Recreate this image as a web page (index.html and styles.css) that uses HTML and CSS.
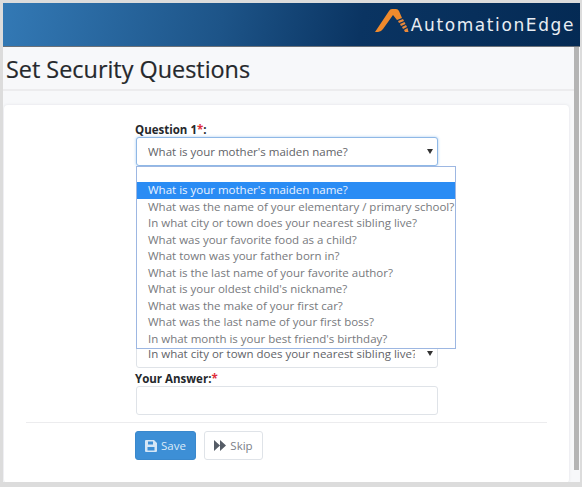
FILE: index.html
```html
<!DOCTYPE html>
<html lang="en">
<head>
  <meta charset="UTF-8">
  <title>Set Security Questions</title>
  <meta name="viewport" content="width=device-width, initial-scale=1.0">
  <link rel="stylesheet" href="styles.css">
</head>
<body>
  <div class="window">
    <header class="topbar">
      <div class="brand">
        <svg class="brand-mark" width="34" height="24" viewBox="0 0 34 24">
          <path d="M0 23 L14 2 Q15 0 17 0 L21 0 Q23 0 24 2 L27 9 L22 11 L18 6 L8 20 Q6 23 3 23 Z" fill="#f08a2c"/>
          <path d="M23 12 L28 10 L29 12 L24 14 Z M25 15 L29.500 13 L30.500 15 L26 17 Z M27 18 L31 16 L32 18 L28 20 Z M29 21 L32.500 19 L33.500 23 L30 23 Z" fill="#e9883a"/>
        </svg>
        <span class="brand-name">AutomationEdge</span>
      </div>
    </header>

    <div class="page-body">
      <div class="page-main">
        <div class="title-band">
          <h1>Set Security Questions</h1>
        </div>

        <main class="card">
          <form class="form-col">
            <label class="q-label">Question 1<span class="req">*</span>:</label>
            <div class="select-wrap">
              <select class="ctl ctl-open">
                <option>What is your mother's maiden name?</option>
              </select>
              <div class="dropdown">
                <div class="opt-search"></div>
                <div class="opt opt-active">What is your mother's maiden name?</div>
                <div class="opt">What was the name of your elementary / primary school?</div>
                <div class="opt">In what city or town does your nearest sibling live?</div>
                <div class="opt">What was your favorite food as a child?</div>
                <div class="opt">What town was your father born in?</div>
                <div class="opt">What is the last name of your favorite author?</div>
                <div class="opt">What is your oldest child's nickname?</div>
                <div class="opt">What was the make of your first car?</div>
                <div class="opt">What was the last name of your first boss?</div>
                <div class="opt">In what month is your best friend's birthday?</div>
              </div>
            </div>

            <select class="ctl">
              <option>In what city or town does your nearest sibling live?</option>
            </select>

            <label class="q-label">Your Answer:<span class="req">*</span></label>
            <input type="text" class="ctl">
          </form>

          <div class="actions">
            <div class="actions-inner">
              <button type="button" class="btn btn-save">
                <svg width="12" height="12" viewBox="0 0 12 12"><path d="M1 0 H9 L12 3 V11 Q12 12 11 12 H1 Q0 12 0 11 V1 Q0 0 1 0 Z M3 1.500 V4.500 H8 V1.500 Z M2.500 7 V10.500 H9.500 V7 Z" fill="#d5e6f6" fill-rule="evenodd"/></svg>
                Save
              </button>
              <button type="button" class="btn btn-skip">
                <svg width="12" height="11" viewBox="0 0 12 11"><path d="M0 0 L6 5.500 L0 11 Z M6 0 L12 5.500 L6 11 Z" fill="#555c66"/></svg>
                Skip
              </button>
            </div>
          </div>
        </main>
      </div>
      <div class="scrollbar"></div>
    </div>
  </div>
</body>
</html>
```

FILE: styles.css
```css
html, body {
  margin: 0;
  height: 100%;
}

body {
  font-family: 'Open Sans', 'Noto Sans', sans-serif;
  background-color: #dcdcdc;
  overflow: hidden;
}

.window {
  width: 577px;
  height: 479px;
  margin: 3px 0 0 3px;
  background-color: #f7f8fa;
  overflow: hidden;
}

.topbar {
  height: 43px;
  display: flex;
  justify-content: flex-end;
  background: linear-gradient(100deg, #3379b5 0%, #1d5488 38%, #0a3462 62%, #042a54 100%);
  border-bottom: 1px solid #6b7178;
}

.brand {
  display: flex;
  align-items: flex-start;
  gap: 2px;
  padding: 6px 0 0 0;
  margin-right: 5px;
}

.brand-mark {
  display: block;
}

.brand-name {
  font-family: 'DejaVu Sans', sans-serif;
  font-size: 17px;
  line-height: 32px;
  letter-spacing: 1.600px;
  color: #e8edf3;
}

.page-body {
  display: flex;
}

.page-main {
  width: 571px;
}

.scrollbar {
  width: 5px;
  height: 423px;
  background-color: #b4b4b4;
}

.title-band {
  height: 42px;
  border-bottom: 2px solid #ececee;
}

h1 {
  margin: 0;
  padding-left: 3px;
  font-size: 23.400px;
  font-weight: 500;
  line-height: 44px;
  color: #25282c;
  -webkit-text-stroke: 0.2px #25282c;
}

.card {
  height: 378px;
  margin: 14px 5px 0 1px;
  background-color: #fff;
  border-radius: 4px;
  box-shadow: 0 0 3px #dfe1e4;
  overflow: hidden;
}

.form-col {
  width: 302px;
  height: 317px;
  margin-left: 132px;
  padding-top: 18px;
  box-sizing: border-box;
}

.q-label {
  display: block;
  font-size: 11.500px;
  font-weight: 700;
  line-height: 14px;
  margin-left: -1px;
  color: #25282c;
}

.req {
  color: #e0303c;
}

.select-wrap {
  position: relative;
  margin-bottom: 173px;
}

.ctl {
  display: block;
  box-sizing: border-box;
  width: 100%;
  height: 29px;
  margin-bottom: 4px;
  padding: 0 22px 0 11px;
  font-family: inherit;
  font-size: 11.500px;
  color: #5f6368;
  background-color: #fff;
  border: 1px solid #dfe3e8;
  border-radius: 3px;
  appearance: none;
}

select.ctl {
  background-image: url("data:image/svg+xml,%3Csvg xmlns='http://www.w3.org/2000/svg' width='6' height='5'%3E%3Cpath d='M0 0H6L3 5Z' fill='%23333'/%3E%3C/svg%3E");
  background-repeat: no-repeat;
  background-position: right 4px center;
}

.select-wrap .ctl {
  margin-bottom: 0;
}

.ctl-open {
  border-color: #8fb8e6;
  box-shadow: 0 0 3px #a9cdf0;
}

.dropdown {
  position: absolute;
  top: 29px;
  left: 0;
  width: 320px;
  box-sizing: border-box;
  padding-bottom: 1px;
  background-color: #fff;
  border: 1px solid #9db7e2;
  z-index: 2;
}

.opt-search {
  height: 15px;
}

.opt {
  height: 16.500px;
  padding-left: 11px;
  font-size: 11.500px;
  line-height: 16.500px;
  white-space: nowrap;
  color: #77797d;
}

.opt-active {
  color: #eaf3ff;
  background-color: #2a8cf4;
}

.actions {
  padding: 0 22px;
}

.actions-inner {
  display: flex;
  gap: 8px;
  padding: 8px 0 0 109px;
  border-top: 1px solid #ececee;
}

.btn {
  display: flex;
  align-items: center;
  justify-content: center;
  gap: 4px;
  box-sizing: border-box;
  height: 29px;
  padding: 0;
  font-family: inherit;
  font-size: 11.500px;
  font-weight: 400;
  border-radius: 3px;
}

.btn-save {
  width: 61px;
  color: #dcebf8;
  background-color: #3d8fd6;
  border: 1px solid #3a88cc;
}

.btn-skip {
  width: 59px;
  color: #7b8088;
  background-color: #fff;
  border: 1px solid #dfe3e8;
}
```
